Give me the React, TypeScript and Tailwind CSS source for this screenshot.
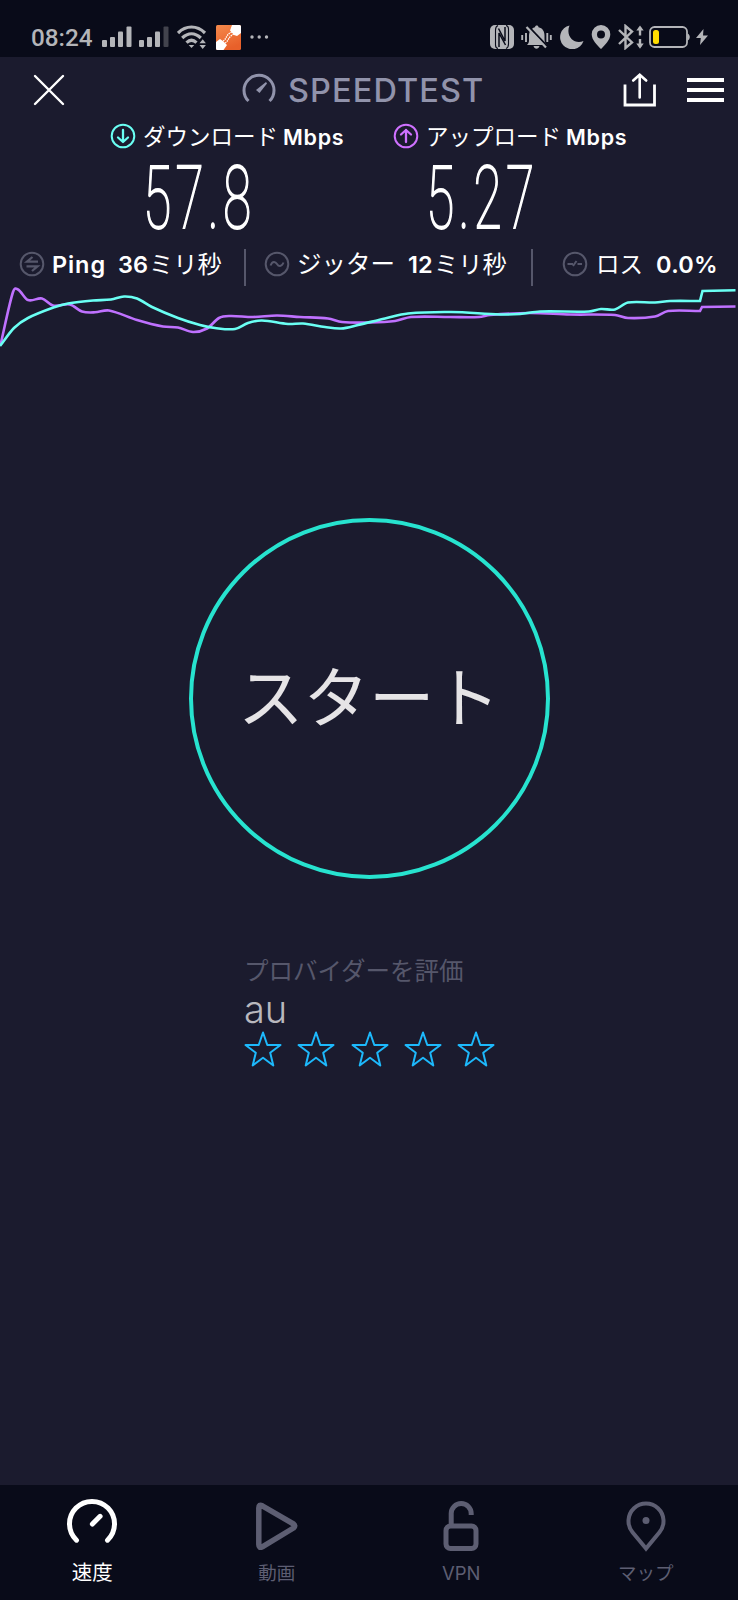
import type { ReactNode } from "react";

const downloadPoints = [
  [0, 66], [14, 48], [28, 38], [55, 27], [68, 23.5], [93, 20.5], [111, 19.5],
  [124, 16.5], [137, 18.5], [152, 27], [178, 38], [200, 45], [215, 48],
  [235, 49], [248, 43], [262, 40.5], [288, 44], [303, 43.5], [325, 47],
  [341, 48.5], [358, 45], [385, 38.5], [408, 33.5], [451, 32], [500, 34.5],
  [520, 34], [540, 31.5], [589, 31.5], [601, 29], [615, 29.5], [628, 22.5],
  [655, 22.5], [670, 21], [700, 21],
];

const uploadPoints = [
  [0.5, 65], [13, 12], [18, 9.5], [28, 20], [42, 18.5], [53, 25.5], [70, 24.5],
  [82, 31.5], [95, 32.3], [109, 30.5], [137, 40], [163, 46.5], [178, 47.5],
  [193, 52], [207, 48.5], [219, 38], [230, 36], [253, 37], [277, 35.5],
  [300, 37], [328, 38.5], [342, 42], [370, 42.5], [395, 41], [411, 37],
  [450, 37], [479, 37], [490, 35], [530, 33], [570, 34.5], [615, 35],
  [628, 38], [655, 36.5], [668, 31], [700, 31],
];

function smoothPath(points: number[][]) {
  let d = `M${points[0][0]} ${points[0][1]}`;
  for (let i = 0; i < points.length - 1; i++) {
    const a = points[Math.max(i - 1, 0)];
    const b = points[i];
    const c = points[i + 1];
    const e = points[Math.min(i + 2, points.length - 1)];
    const k = (c[0] - b[0]) / 3;
    const s1 = (c[1] - a[1]) / (c[0] - a[0]);
    const s2 = (e[1] - b[1]) / (e[0] - b[0]);
    d += ` C${b[0] + k} ${b[1] + k * s1} ${c[0] - k} ${c[1] - k * s2} ${c[0]} ${c[1]}`;
  }
  return d;
}

function Signal({ weak = false }: { weak?: boolean }) {
  return (
    <svg width="30" height="22" viewBox="0 0 30 22" fill="#b4b5b9">
      <rect x="0" y="14" width="5" height="7" rx="1" />
      <rect x="8" y="11" width="5" height="10" rx="1" />
      <rect x="16" y="5.5" width="5" height="15.5" rx="1" />
      <rect x="24.5" y="0.5" width="5" height="20.5" rx="1" fill={weak ? "#42434d" : "#b4b5b9"} />
    </svg>
  );
}

function StatusBar() {
  return (
    <div className="flex h-[57px] items-center bg-[#090b19] pl-[31px] pr-[30px] pt-[17px]">
      <span className="w-[71px] pt-[3px] font-[Roboto] text-[24.3px] font-medium leading-none text-[#b4b5b9]">08:24</span>
      <Signal />
      <div className="w-[7px]" />
      <Signal weak />
      <svg className="ml-[8px]" width="30" height="24" viewBox="0 0 30 24" fill="none" stroke="#b4b5b9" strokeWidth="3.2">
        <path d="M1 8C9 0 20 0 28 8" />
        <path d="M5.2 13C11 7.4 18 7.4 23.8 13" />
        <path d="M9.5 17.6C12.7 14.6 16.3 14.6 19.5 17.6" />
        <path d="M11.7 20h5.6L14.5 23z" fill="#b4b5b9" stroke="none" />
        <path d="M22.5 18.2l3.2-4 3.2 4zM22.5 20l3.2 4 3.2-4z" fill="#b4b5b9" stroke="none" />
      </svg>
      <svg className="ml-[9px]" width="25" height="25" viewBox="0 0 25 25">
        <defs>
          <linearGradient id="app" x1="0" y1="0" x2="0.4" y2="1">
            <stop offset="0" stopColor="#f58a4c" />
            <stop offset="1" stopColor="#e8602a" />
          </linearGradient>
        </defs>
        <rect width="25" height="25" rx="1.5" fill="url(#app)" />
        <path d="M16 0h7.5Q25 0 25 1.5V8l-4 3-3-1-4-4.5zM0 17l4-3 3.5 2.5L11 20l-3.5 5h-6Q0 25 0 23.5z" fill="#fff" />
        <path d="M7 16C11 14 9.5 9.5 16 7M9 18C13 16 12 11.5 18 9" fill="none" stroke="#fff" strokeWidth="1.3" strokeDasharray="1.5 0.8" />
      </svg>
      <svg className="ml-[9px]" width="20" height="4" viewBox="0 0 20 4" fill="#b4b5b9">
        <circle cx="2" cy="2" r="1.7" />
        <circle cx="9.2" cy="2" r="1.7" />
        <circle cx="16.5" cy="2" r="1.7" />
      </svg>

      <div className="ml-auto flex items-center">
        {/* nfc */}
        <svg width="24" height="24" viewBox="0 0 24 24">
          <rect width="24" height="24" rx="5" fill="#b4b5b9" />
          <path d="M8 0.5Q5.5 1.5 5.5 5V20Q5.5 23 8 23.5M16 23.5Q18.5 22.5 18.5 19V4Q18.5 1 16 0.5" fill="none" stroke="#090b19" strokeWidth="1.1" />
          <path d="M9 22V8L15.5 20M8.5 3.5L15 16V2" fill="none" stroke="#090b19" strokeWidth="1.5" />
        </svg>
        {/* muted bell */}
        <svg className="ml-[7px]" width="31" height="24" viewBox="0 0 31 24">
          <path d="M6 20c2.5-2 2-4 2-9C8 6 11 3 14 2.3 14 0 17.5 0 17.5 2.3c4 .8 6 4 6 8.7 0 5 0 7 2.5 9zM12.5 21h6c-1 3.5-5 3.5-6 0z" fill="#b4b5b9" />
          <path d="M7 1l19 20" stroke="#090b19" strokeWidth="2" />
          <path d="M5.5 2L25 22.5" stroke="#b4b5b9" strokeWidth="2.2" />
          <path d="M1.2 10v5M5 8v9M26.3 8v9M29.8 10v5" stroke="#b4b5b9" strokeWidth="1.9" />
        </svg>
        {/* moon */}
        <svg className="ml-[8px]" width="24" height="24" viewBox="0 0 24 24">
          <path d="M9.5 0.5A12 12 0 1 0 23.5 16 C15 20 5 12 9.5 0.5z" fill="#b4b5b9" />
        </svg>
        {/* location */}
        <svg className="ml-[7px]" width="20" height="24" viewBox="0 0 20 24">
          <path d="M10 0a9.3 9.3 0 0 1 9.3 9.3C19.3 15 14 20 10 24 6 20 .7 15 .7 9.3A9.3 9.3 0 0 1 10 0zm0 5.5a4 4 0 1 0 0 8 4 4 0 0 0 0-8z" fill="#b4b5b9" />
        </svg>
        {/* bluetooth */}
        <svg className="ml-[6px]" width="27" height="26" viewBox="0 0 27 26" fill="none" stroke="#b4b5b9">
          <path d="M2 6l13 12.5-6.5 5.5V2L15 7.5 2 20" strokeWidth="2.4" />
          <path d="M23 3.5v8M23 15v8" strokeWidth="2.4" />
          <path d="M19.3 6.5L23 1.5 26.7 6.5zM19.3 19.5L23 24.8 26.7 19.5z" fill="#b4b5b9" stroke="none" />
        </svg>
        {/* battery */}
        <svg className="ml-[5px]" width="42" height="22" viewBox="0 0 42 22">
          <rect x="1" y="1" width="37" height="20" rx="4.5" fill="none" stroke="#b4b5b9" strokeWidth="1.8" />
          <rect x="4" y="4" width="6" height="14" rx="2.5" fill="#ffdc00" />
          <path d="M38.5 7.5c3 1 3 6 0 7z" fill="#b4b5b9" />
        </svg>
        <svg className="ml-[5px]" width="12" height="16" viewBox="0 0 12 16">
          <path d="M7.5 0L0 9h4.8L4 16l8-9.5H7z" fill="#b4b5b9" />
        </svg>
      </div>
    </div>
  );
}

function Header() {
  return (
    <div className="flex h-[64px] items-center pl-[33px] pr-[14px] pt-[2px]">
      <svg width="32" height="32" viewBox="0 0 32 32" stroke="#fff" strokeWidth="2.4" strokeLinecap="round">
        <path d="M2 2l28 28M30 2L2 30" />
      </svg>
      <svg className="-mt-[3px] ml-[177px]" width="34" height="32" viewBox="0 0 34 32">
        <path d="M6.5 28A15 15 0 1 1 27.5 28" fill="none" stroke="#9193ab" strokeWidth="3" />
        <path d="M14 17L24 9 25 10.5 17.5 20z" fill="#9193ab" />
      </svg>
      <span className="ml-[12px] w-[210px] pt-[3px] text-[32.5px] font-medium leading-none tracking-[1.1px] text-[#9193ab]">SPEEDTEST</span>
      <svg className="ml-auto" width="34" height="34" viewBox="0 0 34 34" fill="none" stroke="#fff">
        <path d="M2 11.5V32h29.5V11.5" strokeWidth="2.8" />
        <path d="M16.7 2v22.5M10.2 7.5L16.7 1.8l6.5 5.7" strokeWidth="2.6" strokeLinecap="round" />
      </svg>
      <div className="ml-[30px] flex w-[37px] flex-col gap-[6px]">
        <div className="h-[4px] bg-white" />
        <div className="h-[4px] bg-white" />
        <div className="h-[4px] bg-white" />
      </div>
    </div>
  );
}

type ResultProps = {
  label: string;
  value: string;
  color: string;
  arrow: string;
};

function Result({ label, value, color, arrow }: ResultProps) {
  return (
    <div className="w-[283px]">
      <div className="flex h-[30px] items-center">
        <svg width="26" height="26" viewBox="0 0 26 26" fill="none" stroke={color} strokeWidth="2">
          <circle cx="13" cy="13" r="11.3" />
          <path d={arrow} strokeWidth="2.3" strokeLinecap="round" strokeLinejoin="round" />
        </svg>
        <span className="ml-[7px] w-[140px] whitespace-nowrap pt-[3px] text-[22.5px] leading-none">{label}</span>
        <span className="pt-[3px] text-[21.5px] font-semibold leading-none tracking-[0.7px]">Mbps</span>
      </div>
      <div className="ml-[33px] mt-[6px] h-[78px] origin-left scale-x-[0.59] whitespace-nowrap font-[Roboto] text-[87.5px] font-thin leading-[83px] tracking-[7px] [-webkit-text-stroke:1.9px_white]">
        {value}
      </div>
    </div>
  );
}

function MetricIcon({ children }: { children: ReactNode }) {
  return (
    <svg className="-mt-[6px] shrink-0" width="26" height="26" viewBox="0 0 26 26" fill="none" stroke="#56576b" strokeWidth="2">
      <circle cx="13" cy="13" r="11.3" />
      {children}
    </svg>
  );
}

function Metrics() {
  return (
    <div className="flex h-[38px] items-center whitespace-nowrap pl-[19px] text-[23.5px] leading-none">
      <MetricIcon>
        <path d="M19 10.7H8L13.5 6M7.5 15.3h11L13 20" strokeWidth="2.3" />
      </MetricIcon>
      <span className="-mt-[5px] ml-[7px] w-[66px] font-semibold tracking-[0.9px]">Ping</span>
      <span className="-mt-[5px] w-[31px] font-semibold">36</span>
      <span className="-mt-[5px] w-[95px] text-[24.3px]">ミリ秒</span>
      <div className="h-[37px] w-[2px] bg-[#56576b]" />
      <div className="w-[18px]" />
      <MetricIcon>
        <path d="M6.5 14.5c2-5 5-4 6.5-1.5s4.5 3.5 6.5-1.5" />
      </MetricIcon>
      <span className="-mt-[5px] ml-[7px] w-[111px] text-[24.5px]">ジッター</span>
      <span className="-mt-[5px] w-[26px] font-semibold">12</span>
      <span className="-mt-[5px] w-[97px] text-[24.3px]">ミリ秒</span>
      <div className="h-[37px] w-[2px] bg-[#56576b]" />
      <div className="w-[29px]" />
      <MetricIcon>
        <path d="M5.5 13h5.5M15.5 13h4.5M11 15l3.5-5" />
      </MetricIcon>
      <span className="-mt-[5px] ml-[8px] w-[60px]">ロス</span>
      <span className="-mt-[5px] font-semibold tracking-[0.3px]">0.0%</span>
    </div>
  );
}

function Chart() {
  return (
    <svg className="-mt-[6px] block" width="738" height="70" viewBox="0 0 738 70" fill="none" strokeWidth="2.6">
      <path d={smoothPath(uploadPoints) + " L702 27 L735.5 26.5"} stroke="#bf71ff" />
      <path d={smoothPath(downloadPoints) + " L702.5 11 L735.5 10.3"} stroke="#6afff3" />
    </svg>
  );
}

function Star() {
  return (
    <svg width="38" height="36" viewBox="0 0 38 36" fill="none" stroke="#1db9fc" strokeWidth="2" strokeLinejoin="round">
      <path d="M19 1.5L23.3 14H36.5L26.2 21.8 29.3 34.5 19 26.8 8.7 34.5 11.8 21.8 1.5 14H14.7z" />
    </svg>
  );
}

type TabProps = {
  label: string;
  active?: boolean;
  children: ReactNode;
};

function Tab({ label, active = false, children }: TabProps) {
  return (
    <div className={active ? "flex flex-1 flex-col items-center text-white" : "flex flex-1 flex-col items-center text-[#5d5e72]"}>
      <svg className="mt-[12px]" width="56" height="56" viewBox="0 0 56 56" fill="none" stroke="currentColor" strokeWidth="5">
        {children}
      </svg>
      <span className={active ? "mt-[9px] text-[20.5px] leading-[22px]" : "mt-[9px] text-[18.5px] leading-[22px]"}>{label}</span>
    </div>
  );
}

function App() {
  return (
    <div className="flex h-[1600px] w-[738px] flex-col overflow-hidden bg-[#1b1b2e] font-[Inter,'Noto_Sans_CJK_JP',sans-serif] text-white">
      <StatusBar />
      <Header />
      <div className="flex pl-[110px]">
        <Result label="ダウンロード" value="57.8" color="#6afff3" arrow="M13 7v12M8 14.5l5 4.5 5-4.5" />
        <Result label="アップロード" value="5.27" color="#cf71ff" arrow="M13 19V7M8 11.5L13 7l5 4.5" />
      </div>
      <div className="mt-[13px]">
        <Metrics />
      </div>
      <Chart />

      <button className="mx-auto mt-[168px] flex size-[361px] shrink-0 items-center justify-center rounded-full border-4 border-[#27e3cf] text-[65.5px] leading-none text-[#e6e4e6]">
        スタート
      </button>

      <div className="ml-[244px] mt-[77px] w-[251px]">
        <div className="text-[24.5px] leading-[30px] text-[#56576b]">プロバイダーを評価</div>
        <div className="mt-[3px] text-[38px] font-light leading-[40px] text-[#b9b8be]">au</div>
        <div className="mt-[2px] flex justify-between">
          <Star />
          <Star />
          <Star />
          <Star />
          <Star />
        </div>
      </div>

      <div className="mt-auto flex h-[115px] shrink-0 bg-[#090b19]">
        <Tab label="速度" active>
          <path d="M12.5 43.2A22.5 22.5 0 1 1 43.5 43.2M28.4 27L36.1 19.3" strokeLinecap="round" />
        </Tab>
        <Tab label="動画">
          <path d="M9.8 11q0-4 3.5-2.2L44.5 27q2.5 2 0 4L13.3 49.8q-3.5 1.8-3.5-2.3z" strokeLinejoin="round" strokeWidth="5.5" />
        </Tab>
        <Tab label="VPN">
          <rect x="13" y="29" width="30" height="22.5" rx="4.5" />
          <path d="M18.2 29V16.5a10 10 0 0 1 20 0v1.5" />
        </Tab>
        <Tab label="マップ">
          <path d="M28 51.5L14.5 35.2A17.5 17.5 0 1 1 41.5 35.2z" strokeWidth="4" />
          <circle cx="28" cy="23.5" r="3.5" fill="currentColor" stroke="none" />
        </Tab>
      </div>
    </div>
  );
}

export default App;
